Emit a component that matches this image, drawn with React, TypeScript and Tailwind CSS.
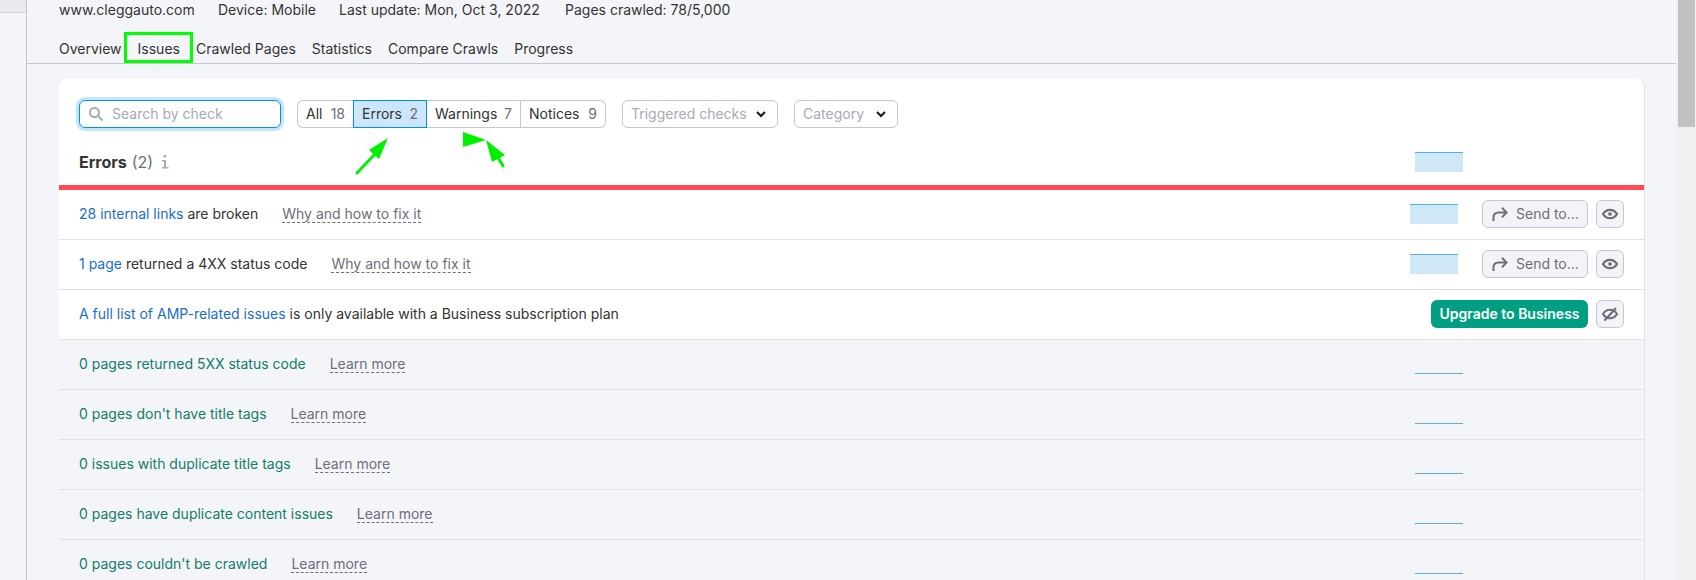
import React from 'react';

const issues = [
  { link: '28 internal links', rest: ' are broken', help: 'Why and how to fix it' },
  { link: '1 page', rest: ' returned a 4XX status code', help: 'Why and how to fix it' },
];

const passed = [
  { text: '0 pages returned 5XX status code' },
  { text: "0 pages don't have title tags" },
  { text: '0 issues with duplicate title tags' },
  { text: '0 pages have duplicate content issues' },
  { text: "0 pages couldn't be crawled" },
];

const tabs = ['Overview', 'Issues', 'Crawled Pages', 'Statistics', 'Compare Crawls', 'Progress'];

const EyeIcon = () => (
  <svg width="18" height="16" viewBox="0 0 18 16" fill="none" stroke="#6c6e79" strokeWidth="2.200">
    <path d="M2 8c1.600-2.800 4-4.200 7-4.200s5.400 1.400 7 4.200c-1.600 2.800-4 4.200-7 4.200S3.600 10.800 2 8z" />
    <circle cx="9" cy="8" r="1.600" fill="#6c6e79" strokeWidth="0.500" />
  </svg>
);

const EyeOffIcon = () => (
  <svg width="18" height="16" viewBox="0 0 18 16" fill="none" stroke="#6c6e79" strokeWidth="2">
    <path d="M2 8c1.600-2.800 4-4.200 7-4.200s5.400 1.400 7 4.200c-1.600 2.800-4 4.200-7 4.200S3.600 10.800 2 8z" />
    <path d="M3.500 14.500L15 2" strokeWidth="2.200" />
  </svg>
);

const SendIcon = () => (
  <svg width="16" height="16" viewBox="0 0 16 16" fill="none" stroke="#6c6e79" strokeWidth="2">
    <path d="M1.500 15V11.500C1.500 8.200 3.500 6.500 6.500 6.500H14" />
    <path d="M10 1.800L14.700 6.500L10 11.200" />
  </svg>
);

const Chevron = () => (
  <svg width="12" height="12" viewBox="0 0 12 12" fill="none" stroke="#17171c" strokeWidth="2">
    <path d="M2 4l4 4 4-4" />
  </svg>
);

const Dashed = ({ children }: { children: React.ReactNode }) => (
  <span className="ml-[24px] border-b border-dashed border-[#6c6e79] leading-[17px] text-[#6c6e79]">{children}</span>
);

const EyeButton = ({ off }: { off?: boolean }) => (
  <button
    type="button"
    className="flex h-[28px] w-[28px] items-center justify-center rounded-md border border-[#c4c7cf] bg-[#f4f4f8]"
  >
    {off ? <EyeOffIcon /> : <EyeIcon />}
  </button>
);

const Bar = () => <div className="h-[20px] w-[48px] border-t border-[#4db1f5] bg-[#d0e7f8]" />;

const Filter = ({ label, count, width, active }: { label: string; count: string; width: string; active?: boolean }) => (
  <div
    className={`flex h-[28px] items-center justify-between px-2 pb-[2px] ${width} ${
      active ? 'border border-[#008ff8] bg-[#cce7fd]' : 'border-y border-r border-[#c4c7cf]'
    }`}
  >
    <span>{label}</span>
    <span className="text-[#6c6e79]">{count}</span>
  </div>
);

const Select = ({ label, width }: { label: string; width: string }) => (
  <div className={`flex h-[28px] items-center justify-between rounded-md border border-[#c4c7cf] bg-white pl-2 pr-[10px] text-[#a8aab4] ${width}`}>
    <span className="pb-[2px]">{label}</span>
    <Chevron />
  </div>
);

const App = () => {
  return (
    <div className="relative flex h-[580px] overflow-hidden bg-[#f4f5f9] text-[14px] text-[#333333] [font-family:Inter,sans-serif]">
      {/* left strip */}
      <div className="w-[27px] shrink-0 border-r border-[#c4c7cf]">
        <div className="h-[13px] border-b border-[#d5d7de] bg-[#e9eaef]" />
      </div>

      <div className="min-w-0 flex-1">
        {/* header */}
        <div className="h-[64px] border-b border-[#c4c7cf] pl-[32px]">
          <div className="flex h-[18px] items-center">
            <span className="w-[159px]">www.cleggauto.com</span>
            <span className="w-[121px]">Device: Mobile</span>
            <span className="w-[226px]">Last update: Mon, Oct 3, 2022</span>
            <span>Pages crawled: 78/5,000</span>
          </div>
          <div className="mt-[21px] flex h-[18px] items-center gap-4">
            {tabs.map((tab) => (
              <span key={tab}>{tab}</span>
            ))}
          </div>
        </div>

        {/* card */}
        <div className="ml-[32px] mr-[31px] mt-[15px] rounded-t-lg border-r border-[#e0e1e9] bg-white">
          <div className="flex px-[20px] pt-[21px]">
            <div className="flex h-[28px] w-[202px] items-center rounded-md border border-[#008ff8] pl-2 shadow-[0_0_0_3px_#c4e5fe]">
              <svg width="16" height="16" viewBox="0 0 16 16" fill="none" stroke="#a8aab4" strokeWidth="2">
                <circle cx="6.500" cy="6.500" r="4.500" />
                <path d="M10 10l4.500 4.500" />
              </svg>
              <span className="ml-2 pb-[2px] text-[#a8aab4]">Search by check</span>
            </div>

            <div className="ml-[16px] flex">
              <div className="flex h-[28px] w-[56px] items-center justify-between rounded-l-md border-y border-l border-[#c4c7cf] pl-2 pr-2 pb-[2px]">
                <span>All</span>
                <span className="text-[#6c6e79]">18</span>
              </div>
              <Filter label="Errors" count="2" width="w-[74px]" active />
              <Filter label="Warnings" count="7" width="w-[94px]" />
              <div className="flex h-[28px] w-[85px] items-center justify-between rounded-r-md border border-l-0 border-[#c4c7cf] px-2 pb-[2px]">
                <span>Notices</span>
                <span className="text-[#6c6e79]">9</span>
              </div>
            </div>

            <div className="ml-[16px] flex gap-4">
              <Select label="Triggered checks" width="w-[156px]" />
              <Select label="Category" width="w-[104px]" />
            </div>
          </div>

          <div className="flex h-[57px] items-center justify-between pl-[20px] pr-[181px] pt-[11px]">
            <div className="flex items-center text-[16px]">
              <span className="font-bold">Errors</span>
              <span className="ml-[5px] text-[#6c6e79]">(2)</span>
              <svg className="ml-[8px]" width="8" height="16" viewBox="0 0 8 16" fill="#a8aab4">
                <rect x="2.500" y="1" width="2.500" height="2.500" />
                <path d="M1 6h4v7H7.500v1.500H1V13h2V7.500H1z" />
              </svg>
            </div>
            <Bar />
          </div>
          <div className="h-[5px] bg-[#ff4953]" />

          {issues.map((row) => (
            <div key={row.link} className="flex h-[50px] items-center border-b border-[#e0e1e9] pb-px pl-[20px] pr-[20px]">
              <div className="flex-1 pb-[2px]">
                <span className="text-[#1a6ecb]">{row.link}</span>
                <span>{row.rest}</span>
                <Dashed>{row.help}</Dashed>
              </div>
              <Bar />
              <button
                type="button"
                className="ml-[24px] flex h-[28px] w-[106px] items-center gap-2 rounded-md border border-[#c4c7cf] bg-[#f4f4f8] pl-[9px] text-[#6c6e79]"
              >
                <SendIcon />
                <span className="pb-[2px]">Send to...</span>
              </button>
              <div className="ml-[8px]">
                <EyeButton />
              </div>
            </div>
          ))}

          <div className="flex h-[50px] items-center border-b border-[#e0e1e9] pb-px px-[20px]">
            <div className="flex-1 pb-[2px]">
              <span className="text-[#1a6ecb]">A full list of AMP-related issues</span>
              <span> is only available with a Business subscription plan</span>
            </div>
            <button
              type="button"
              className="flex h-[28px] w-[157px] items-center justify-center rounded-md bg-[#009f81] pb-[2px] font-semibold text-white"
            >
              Upgrade to Business
            </button>
            <div className="ml-[8px]">
              <EyeButton off />
            </div>
          </div>

          {passed.map((row) => (
            <div key={row.text} className="flex h-[50px] items-center border-b border-[#e0e1e9] bg-[#f4f5f9] pb-px pl-[20px] pr-[181px]">
              <div className="flex-1 pb-[2px]">
                <span className="text-[#137c68]">{row.text}</span>
                <Dashed>Learn more</Dashed>
              </div>
              <div className="mb-[14px] h-px w-[48px] self-end bg-[#5dade8]" />
            </div>
          ))}
        </div>
      </div>

      {/* scrollbar */}
      <div className="w-[20px] shrink-0 bg-[#f1f1f1] pl-[2px] pr-px">
        <div className="h-[127px] bg-[#c1c1c1]" />
      </div>

      {/* green markup drawn over the page */}
      <div className="absolute left-[124px] top-[32px] h-[31px] w-[69px] border-[3px] border-[#00ff00]" />
      <svg className="absolute left-0 top-0" width="1696" height="580" stroke="none">
        <path d="M388 138L369 150L379 159z" fill="#00f000" />
        <path d="M357 173L375 154" stroke="#00f000" strokeWidth="3" strokeLinecap="round" fill="none" />
        <path d="M463 132L486 140L463 147z" fill="#00f000" />
        <path d="M486 140L492 162L505 155z" fill="#00f000" />
        <path d="M503 166L496 154" stroke="#00f000" strokeWidth="3" strokeLinecap="round" fill="none" />
      </svg>
    </div>
  );
};

export default App;
